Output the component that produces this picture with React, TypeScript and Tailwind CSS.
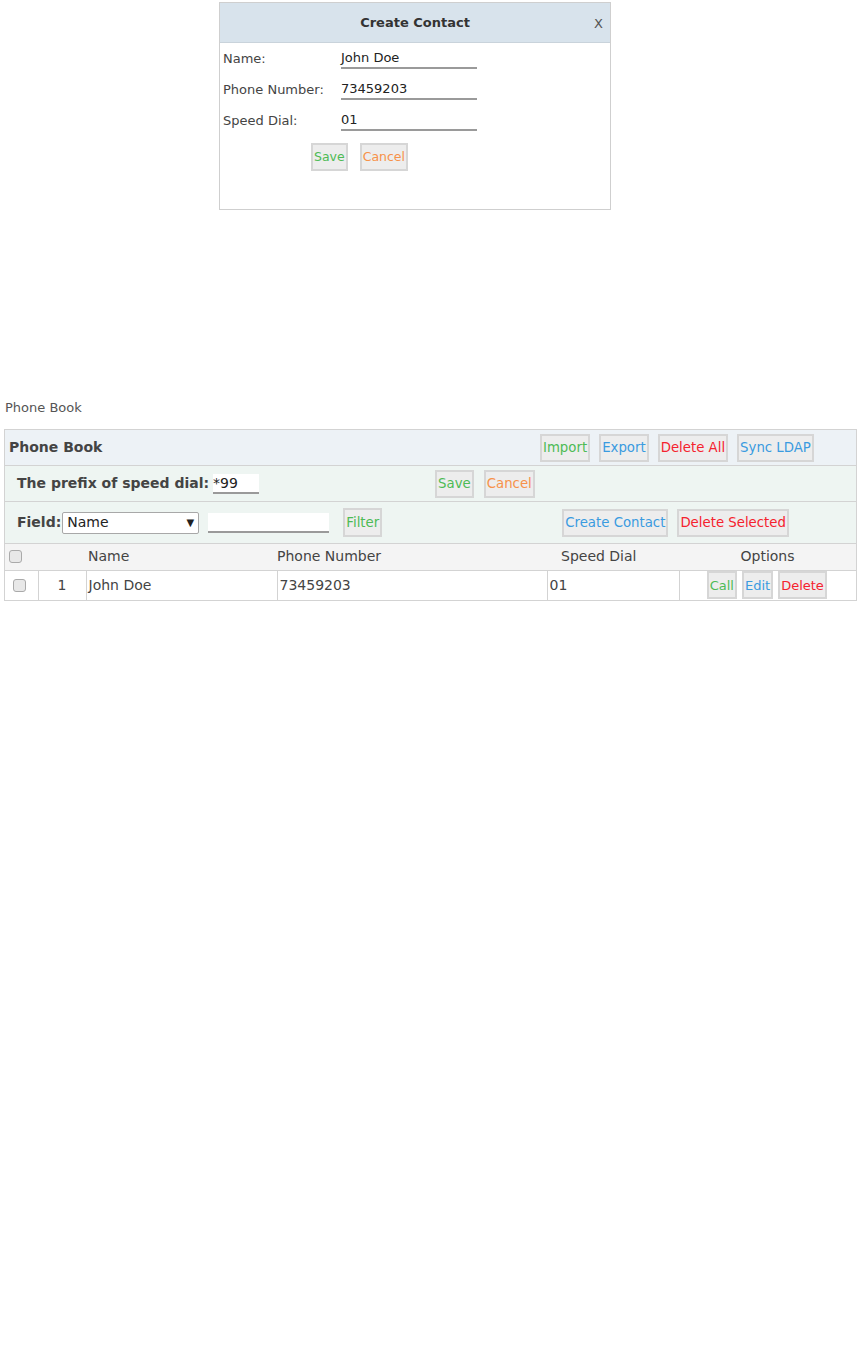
import React from 'react'

type BtnColor = 'green' | 'blue' | 'red' | 'orange'

const textColor: Record<BtnColor, string> = {
  green: 'text-[#4dbb55]',
  blue: 'text-[#3a9be0]',
  red: 'text-[#f5222d]',
  orange: 'text-[#f7924a]',
}

function Btn({ label, color, className = '' }: { label: string; color: BtnColor; className?: string }) {
  return (
    <button
      className={`h-[28px] px-[1px] border-2 border-[#d6d6d6] bg-[#ededed] leading-none ${textColor[color]} ${className}`}
    >
      {label}
    </button>
  )
}

function LineInput({ value, className = '' }: { value: string; className?: string }) {
  return (
    <div className={`h-[20px] border-b-2 border-[#9a9a9a] bg-white text-[13px] leading-[18px] text-[#222] ${className}`}>
      {value}
    </div>
  )
}

function CreateContactDialog() {
  return (
    <div className="ml-[219px] mt-[1px] w-[392px] h-[208px] border border-[#cfcfcf] bg-white">
      <div className="relative h-[40px] bg-[#d8e3ec] border-b border-[#c9d3db] flex items-center justify-center">
        <span className="font-bold text-[13px] text-[#333]">Create Contact</span>
        <span className="absolute right-[7px] top-[11px] text-[13px] text-[#555]">X</span>
      </div>
      <div className="pl-[3px] text-[13px] text-[#444]">
        {[
          ['Name:', 'John Doe'],
          ['Phone Number:', '73459203'],
          ['Speed Dial:', '01'],
        ].map(([label, value]) => (
          <div key={label} className="flex items-center h-[31px]">
            <span className="w-[118px]">{label}</span>
            <LineInput value={value} className="w-[136px]" />
          </div>
        ))}
        <div className="flex gap-[12px] pl-[88px] pt-[7px]">
          <Btn label="Save" color="green" className="text-[12.5px] px-0" />
          <Btn label="Cancel" color="orange" className="text-[12.5px] px-0" />
        </div>
      </div>
    </div>
  )
}

function PhoneBook() {
  return (
    <div className="mt-[188px]">
      <div className="pl-[5px] text-[13px] text-[#555] h-[31px]">Phone Book</div>
      <div className="ml-[4px] w-[853px] border border-[#d3d3d3] text-[14px] text-[#444]">
        <div className="flex items-center h-[36px] bg-[#edf2f6] border-b border-[#d3d3d3] pl-[4px]">
          <span className="font-bold w-[531px]">Phone Book</span>
          <div className="flex gap-[9px] text-[13.3px]">
            <Btn label="Import" color="green" />
            <Btn label="Export" color="blue" />
            <Btn label="Delete All" color="red" />
            <Btn label="Sync LDAP" color="blue" />
          </div>
        </div>
        <div className="flex items-center h-[36px] bg-[#eef5f2] border-b border-[#d3d3d3] pl-[12px]">
          <span className="font-bold">The prefix of speed dial:</span>
          <LineInput value="*99" className="ml-[4px] w-[46px] text-[14px]" />
          <div className="flex gap-[10px] ml-[176px] text-[13.3px]">
            <Btn label="Save" color="green" />
            <Btn label="Cancel" color="orange" />
          </div>
        </div>
        <div className="flex items-center h-[42px] bg-[#eef5f2] border-b border-[#d3d3d3] pl-[12px]">
          <span className="font-bold">Field:</span>
          <div className="ml-[1px] w-[137px] h-[22px] border border-[#a8a8a8] rounded-[2px] bg-white flex items-center justify-between px-[4px]">
            <span className="text-[14px] text-[#222]">Name</span>
            <span className="text-[10px] text-[#222]">▼</span>
          </div>
          <LineInput value="" className="ml-[9px] w-[121px]" />
          <Btn label="Filter" color="green" className="ml-[14px] h-[29px] text-[13.3px]" />
          <div className="flex gap-[9px] ml-[180px] text-[13.3px]">
            <Btn label="Create Contact" color="blue" />
            <Btn label="Delete Selected" color="red" />
          </div>
        </div>
        <table className="w-full border-collapse">
          <thead>
            <tr className="h-[26px] bg-[#f4f4f4] border-b border-[#d3d3d3]">
              <th className="w-[33px] font-normal text-left pl-[4px]">
                <span className="block w-[13px] h-[13px] border border-[#aaa] rounded-[3px] bg-[#e8e8e8]" />
              </th>
              <th className="w-[48px]" />
              <th className="w-[191px] font-normal text-left pl-[2px]">Name</th>
              <th className="w-[270px] font-normal text-left pl-0">Phone Number</th>
              <th className="w-[132px] font-normal text-left pl-[14px]">Speed Dial</th>
              <th className="font-normal text-center">Options</th>
            </tr>
          </thead>
          <tbody>
            <tr className="h-[30px]">
              <td className="border-r border-[#d3d3d3] pl-[8px]">
                <span className="block w-[13px] h-[13px] border border-[#aaa] rounded-[3px] bg-[#e8e8e8]" />
              </td>
              <td className="border-r border-[#d3d3d3] text-center">1</td>
              <td className="border-r border-[#d3d3d3] pl-[2px]">John Doe</td>
              <td className="border-r border-[#d3d3d3] pl-[2px]">73459203</td>
              <td className="border-r border-[#d3d3d3] pl-[2px]">01</td>
              <td className="text-center">
                <div className="flex justify-center gap-[5px] text-[13px] pr-[2px]">
                  <Btn label="Call" color="green" className="px-0" />
                  <Btn label="Edit" color="blue" className="px-0" />
                  <Btn label="Delete" color="red" className="px-0" />
                </div>
              </td>
            </tr>
          </tbody>
        </table>
      </div>
    </div>
  )
}

export default function App() {
  return (
    <div className="w-[861px] min-h-[1345px] bg-white pt-[1px]" style={{ fontFamily: '"DejaVu Sans", Verdana, sans-serif' }}>
      <CreateContactDialog />
      <PhoneBook />
    </div>
  )
}
